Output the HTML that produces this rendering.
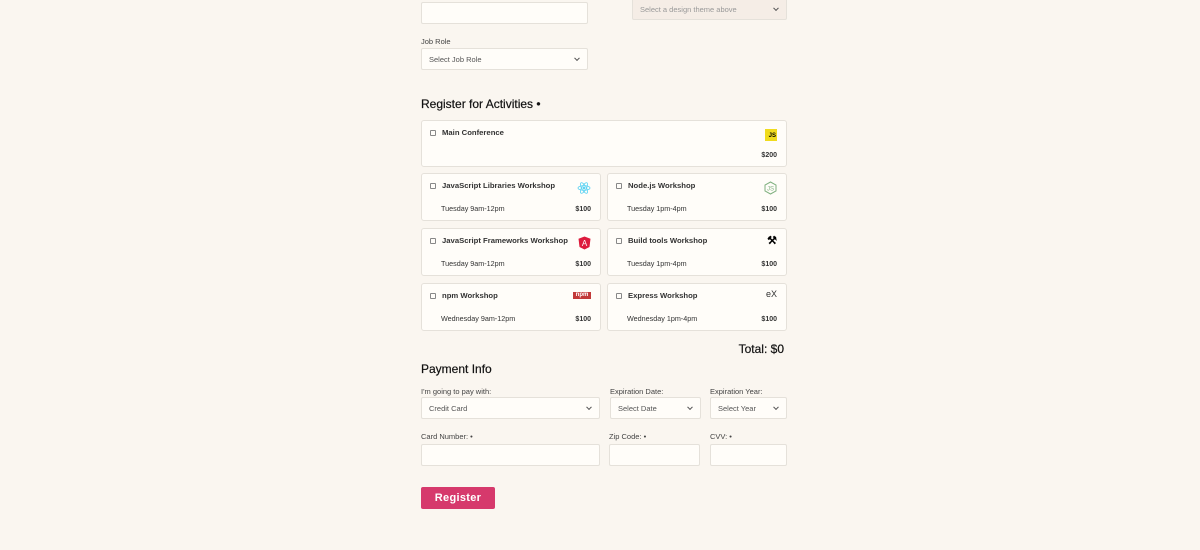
<!DOCTYPE html>
<html><head><meta charset="utf-8"><style>
*{box-sizing:border-box;margin:0;padding:0}
body{width:1200px;height:550px;background:#faf6f0;font-family:"Liberation Sans",sans-serif;position:relative;overflow:hidden;color:#333}
.a{position:absolute}
.in{position:absolute;background:#fffdf9;border:1px solid #e5e1da;border-radius:2px}
.sel{position:absolute;background:#fffdf9;border:1px solid #e5e1da;border-radius:2px;font-size:7.5px;color:#555;padding-left:7px;display:flex;align-items:center}
.sel::after{content:"";position:absolute;right:8px;top:50%;width:3px;height:3px;border-right:1px solid #555;border-bottom:1px solid #555;transform:translateY(-70%) rotate(45deg)}
.lbl{position:absolute;font-size:7.5px;color:#444}
.card{position:absolute;background:#fffdf9;border:1px solid #e5e1da;border-radius:3px}
.cb{position:absolute;left:8px;top:9px;width:6px;height:6px;border:1px solid #888;border-radius:1px}
.t{position:absolute;left:20px;top:7px;font-size:7.7px;font-weight:bold;color:#333}
.d{position:absolute;left:19px;top:30px;font-size:7.2px;color:#333}
.p{position:absolute;right:9px;bottom:7px;font-size:7px;font-weight:bold;color:#333}
.ic{position:absolute;right:9px;top:7px}
h2{position:absolute;font-weight:normal;font-size:12px;color:#111;-webkit-text-stroke:0.2px #111}
</style></head><body>
<div class="in" style="left:421px;top:2px;width:167px;height:22px"></div>
<div class="sel" style="left:632px;top:-2px;width:155px;height:22px;background:#f5ede6;color:#999">Select a design theme above</div>
<div class="lbl" style="left:421px;top:37px">Job Role</div>
<div class="sel" style="left:421px;top:48px;width:167px;height:22px">Select Job Role</div>
<h2 style="left:421px;top:97px">Register for Activities •</h2>

<div class="card" style="left:421px;top:120px;width:366px;height:47px"><div class="cb"></div><div class="t">Main Conference</div>
<div class="ic" style="top:8px;width:12px;height:12px;background:#f0db1d;font-size:6px;font-weight:bold;color:#000;text-align:right;padding-top:4px;padding-right:1px;line-height:1">JS</div><div class="p">$200</div></div>

<div class="card" style="left:421px;top:173px;width:180px;height:48px"><div class="cb"></div><div class="t">JavaScript Libraries Workshop</div>
<svg class="ic" width="14" height="14" viewBox="0 0 14 14" fill="none" stroke="#5ed3f3" stroke-width="0.8"><ellipse cx="7" cy="7" rx="6" ry="2.3"/><ellipse cx="7" cy="7" rx="6" ry="2.3" transform="rotate(60 7 7)"/><ellipse cx="7" cy="7" rx="6" ry="2.3" transform="rotate(120 7 7)"/><circle cx="7" cy="7" r="1" fill="#5ed3f3"/></svg>
<div class="d">Tuesday 9am-12pm</div><div class="p">$100</div></div>
<div class="card" style="left:607px;top:173px;width:180px;height:48px"><div class="cb"></div><div class="t">Node.js Workshop</div>
<svg class="ic" width="13" height="14" viewBox="0 0 13 14"><path d="M6.5 1L12 4v6l-5.5 3L1 10V4z" fill="none" stroke="#7fb07f" stroke-width="1"/><text x="6.5" y="9.5" font-size="6" text-anchor="middle" fill="#7fb07f" font-family="Liberation Sans">JS</text></svg>
<div class="d">Tuesday 1pm-4pm</div><div class="p">$100</div></div>

<div class="card" style="left:421px;top:228px;width:180px;height:48px"><div class="cb"></div><div class="t">JavaScript Frameworks Workshop</div>
<svg class="ic" width="13" height="14" viewBox="0 0 13 14"><path d="M6.5 0.5L12.5 2.7 11.5 11 6.5 13.5 1.5 11 0.5 2.7z" fill="#dd1b3d"/><text x="6.5" y="10" font-size="8" text-anchor="middle" fill="#fff" font-family="Liberation Sans">A</text></svg>
<div class="d">Tuesday 9am-12pm</div><div class="p">$100</div></div>
<div class="card" style="left:607px;top:228px;width:180px;height:48px"><div class="cb"></div><div class="t">Build tools Workshop</div>
<div class="ic" style="font-size:11px;color:#000;top:5px;font-weight:bold">⚒</div>
<div class="d">Tuesday 1pm-4pm</div><div class="p">$100</div></div>

<div class="card" style="left:421px;top:283px;width:180px;height:48px"><div class="cb"></div><div class="t">npm Workshop</div>
<div class="ic" style="top:8px;width:18px;height:7px;background:#c23a3a;color:#fff;font-size:6px;font-weight:bold;line-height:7px;text-align:center">npm</div>
<div class="d">Wednesday 9am-12pm</div><div class="p">$100</div></div>
<div class="card" style="left:607px;top:283px;width:180px;height:48px"><div class="cb"></div><div class="t">Express Workshop</div>
<div class="ic" style="font-size:9px;color:#333;top:5px">eX</div>
<div class="d">Wednesday 1pm-4pm</div><div class="p">$100</div></div>

<div class="a" style="right:416px;top:342px;font-size:12px;color:#111;-webkit-text-stroke:0.2px #111">Total: $0</div>
<h2 style="left:421px;top:362px">Payment Info</h2>
<div class="lbl" style="left:421px;top:387px">I'm going to pay with:</div>
<div class="lbl" style="left:610px;top:387px">Expiration Date:</div>
<div class="lbl" style="left:710px;top:387px">Expiration Year:</div>
<div class="sel" style="left:421px;top:397px;width:179px;height:22px">Credit Card</div>
<div class="sel" style="left:610px;top:397px;width:91px;height:22px">Select Date</div>
<div class="sel" style="left:710px;top:397px;width:77px;height:22px">Select Year</div>
<div class="lbl" style="left:421px;top:432px">Card Number: •</div>
<div class="lbl" style="left:609px;top:432px">Zip Code: •</div>
<div class="lbl" style="left:710px;top:432px">CVV: •</div>
<div class="in" style="left:421px;top:444px;width:179px;height:22px"></div>
<div class="in" style="left:609px;top:444px;width:91px;height:22px"></div>
<div class="in" style="left:710px;top:444px;width:77px;height:22px"></div>
<div class="a" style="left:421px;top:487px;width:74px;height:22px;background:#d6396c;border-radius:2px;color:#fff;font-size:11px;font-weight:bold;text-align:center;line-height:22px;letter-spacing:0.3px">Register</div>
</body></html>
